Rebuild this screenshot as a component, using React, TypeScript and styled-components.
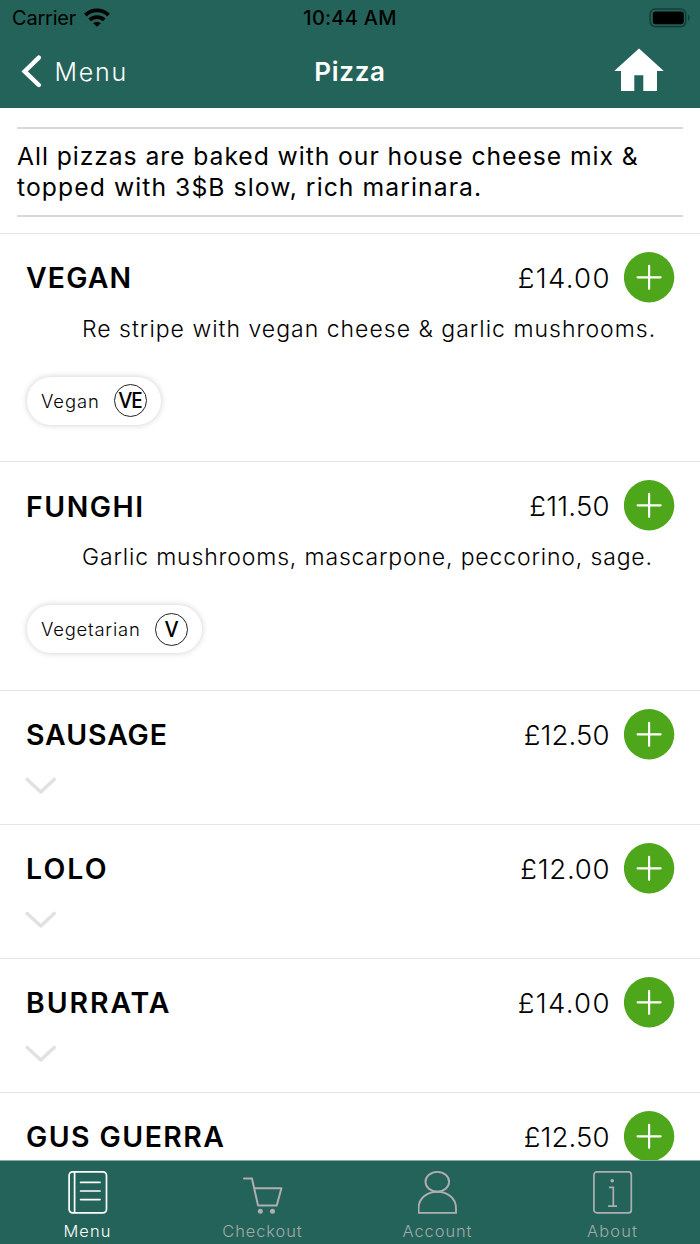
import React from "react";
import styled, { createGlobalStyle } from "styled-components";

const GREEN = "#24635a";

const GlobalStyle = createGlobalStyle`
  *, *::before, *::after { box-sizing: border-box; }
  body { margin: 0; background: #fff; }
  button { font: inherit; color: inherit; background: none; border: 0; padding: 0; margin: 0; }
  h1, h2, p { margin: 0; font-weight: inherit; }
  svg { display: block; flex: none; }
`;

const Screen = styled.div`
  display: flex;
  flex-direction: column;
  width: 700px;
  height: 1244px;
  overflow: hidden;
  background: #fff;
  color: #000;
  font-family: Inter, "Liberation Sans", sans-serif;
  white-space: nowrap;
`;

const Header = styled.header`
  flex: none;
  height: 108px;
  background: ${GREEN};
`;

const StatusBar = styled.div`
  display: grid;
  grid-template-columns: 1fr auto 1fr;
  align-items: center;
  height: 35px;
  padding: 0 12px;
  font-size: 20px;
`;

const Carrier = styled.div`
  display: flex;
  align-items: center;
  gap: 8px;
  letter-spacing: -0.2px;
`;

const Clock = styled.div`
  font-weight: 500;
  letter-spacing: 0.25px;
`;

const BatterySlot = styled.div`
  justify-self: end;
  margin-right: -2px;
`;

const NavBar = styled.nav`
  display: grid;
  grid-template-columns: 1fr auto 1fr;
  align-items: center;
  height: 73px;
  padding: 0 21px;
  color: #fff;
`;

const BackButton = styled.button`
  display: flex;
  align-items: center;
  gap: 12.5px;
  height: 60px;
  font-size: 25px;
  font-weight: 300;
  letter-spacing: 1.8px;
`;

const Title = styled.h1`
  font-size: 26px;
  font-weight: 600;
  letter-spacing: 0.7px;
`;

const HomeButton = styled.button`
  justify-self: end;
  margin: 0 15px 4px 0;
`;

const Content = styled.main`
  flex: 1;
  min-height: 0;
  overflow: hidden;
`;

const Intro = styled.p`
  margin: 19px 17px 15.6px;
  padding: 12px 0;
  border-top: 2px solid #d9d9d9;
  border-bottom: 2px solid #d9d9d9;
  font-size: 24.7px;
  line-height: 31px;
`;

const Line = styled.span<{ $tracking: number }>`
  display: block;
  letter-spacing: ${(p) => p.$tracking}px;
`;

const Item = styled.section<{ $open: boolean }>`
  height: ${(p) => (p.$open ? 228.7 : 134)}px;
  padding: 18px 25.5px 0 26px;
  border-top: 1px solid #e6e6e6;
`;

const ItemHead = styled.div`
  display: flex;
  align-items: center;
  height: 51px;
`;

const Name = styled.h2<{ $tracking: number }>`
  flex: 1;
  padding-top: 1px;
  font-size: 28.4px;
  font-weight: 600;
  letter-spacing: ${(p) => p.$tracking - 0.15}px;
`;

const Price = styled.span<{ $tracking: number }>`
  margin-right: ${(p) => 14 - p.$tracking}px;
  padding-top: 1px;
  font-size: 27.6px;
  font-weight: 300;
  letter-spacing: ${(p) => p.$tracking}px;
`;

const Description = styled.p<{ $tracking: number }>`
  margin: 11px 0 0 56px;
  font-size: 23px;
  font-weight: 300;
  line-height: 30px;
  letter-spacing: ${(p) => p.$tracking}px;
`;

const Chip = styled.div`
  display: inline-flex;
  align-items: center;
  gap: 14px;
  height: 48px;
  margin: 33px 0 0 1px;
  padding: 0 14px;
  border-radius: 24px;
  box-shadow: 0 0 6px rgba(0, 0, 0, 0.2);
  font-size: 18.4px;
  font-weight: 300;
`;

const ChipLabel = styled.span<{ $tracking: number }>`
  letter-spacing: ${(p) => p.$tracking}px;
`;

const DietMark = styled.span`
  display: flex;
  align-items: center;
  justify-content: center;
  width: 33px;
  height: 33px;
  padding: 0 0 2px;
  border: 1px solid #222;
  border-radius: 50%;
  font-family: "Noto Sans", "Open Sans", sans-serif;
  font-size: 21.5px;
  font-weight: 500;
  line-height: 29px;
  letter-spacing: -1.2px;
`;

const Expand = styled.button`
  display: block;
  margin: 17px 0 0 -1px;
`;

const TabBar = styled.footer`
  flex: none;
  display: grid;
  grid-template-columns: repeat(4, 1fr);
  height: 84px;
  border-top: 1px solid #8fa9a5;
  background: ${GREEN};
`;

const Tab = styled.button<{ $active: boolean }>`
  display: flex;
  flex-direction: column;
  align-items: center;
  padding-top: 9px;
  color: ${(p) => (p.$active ? "#fff" : "#b0aeb0")};
`;

const TabLabel = styled.span<{ $tracking: number; $active: boolean }>`
  margin-top: 5px;
  font-size: 16.4px;
  font-weight: 300;
  line-height: 24px;
  letter-spacing: ${(p) => p.$tracking}px;
  color: ${(p) => (p.$active ? "#fff" : "#a3aaa9")};
`;

const WifiIcon = () => (
  <svg width="26" height="20" viewBox="0 0 26 20">
    <g fill="none" stroke="#000" strokeWidth="3.8">
      <path d="M1.4 7.1C8 .9 18 .9 24.6 7.1" />
      <path d="M5.7 11.9C10 8.1 16 8.1 20.3 11.9" />
    </g>
    <path d="M9.2 15.3C11.4 13.4 14.6 13.4 16.8 15.3L13 18.8Z" />
  </svg>
);

const BatteryIcon = () => (
  <svg width="41" height="20" viewBox="0 0 41 20">
    <rect x="1.2" y="1" width="35.5" height="17.6" rx="5" fill="none" stroke="#133f38" strokeWidth="1.6" />
    <rect x="3.8" y="3.4" width="31" height="12.8" rx="2.6" />
    <path d="M39 6.8C41.2 7.6 41.2 12 39 12.8Z" fill="#133f38" />
  </svg>
);

const BackIcon = () => (
  <svg width="21" height="34" viewBox="0 0 21 34">
    <path d="M17.8 2.6L3.6 16.4L17.8 30" fill="none" stroke="#fff" strokeWidth="4.4" strokeLinecap="round" strokeLinejoin="miter" />
  </svg>
);

const HomeIcon = () => (
  <svg width="50" height="44" viewBox="0 0 50 44">
    <path d="M25 .5L49.8 23H43V43H29.3V27.3H20.3V43H7V23H.2Z" fill="#fff" />
  </svg>
);

const AddIcon = () => (
  <svg width="51" height="51" viewBox="0 0 51 51">
    <circle cx="25.1" cy="25.3" r="25.2" fill="#4ea61a" />
    <path d="M25.1 13.8V36.8M13.6 25.3H36.6" stroke="#fff" strokeWidth="2.2" strokeLinecap="round" />
  </svg>
);

const ChevronIcon = () => (
  <svg width="31" height="19" viewBox="0 0 31 19">
    <path d="M2.2 2.4L15.8 15L29.2 2.4" fill="none" stroke="#e1e1e3" strokeWidth="3.4" strokeLinecap="round" strokeLinejoin="round" />
  </svg>
);

const MenuIcon = () => (
  <svg width="40" height="44" viewBox="0 0 40 44" fill="none" stroke="currentColor" strokeWidth="1.7">
    <rect x="1.1" y="1.9" width="37.4" height="41" rx="3.6" />
    <path d="M6.6 2V43" />
    <path d="M12.6 12.4H32M12.6 21H32M12.6 29.6H32" strokeLinecap="round" />
  </svg>
);

const CartIcon = () => (
  <svg width="40" height="44" viewBox="0.3 0 40 44" fill="none" stroke="currentColor" strokeWidth="2" strokeLinecap="round" strokeLinejoin="round">
    <path d="M1.3 8.6H9.3L15.3 35.4H34L38.7 18.3H11.5" />
    <circle cx="17.6" cy="41.2" r="2.5" fill="currentColor" stroke="none" />
    <circle cx="29.8" cy="41.2" r="2.5" fill="currentColor" stroke="none" />
  </svg>
);

const AccountIcon = () => (
  <svg width="40" height="44" viewBox="0.7 0 40 44" fill="none" stroke="currentColor" strokeWidth="1.9">
    <ellipse cx="20" cy="11.8" rx="11.8" ry="9.9" />
    <path d="M1.3 42.9V38C1.3 28.2 9.6 21.7 20 21.7S38.7 28.2 38.7 38V42.9Z" />
  </svg>
);

const AboutIcon = () => (
  <svg width="40" height="44" viewBox="0.5 0 40 44" fill="none" stroke="currentColor" strokeWidth="1.7">
    <rect x="1.4" y="1.9" width="37.4" height="41" rx="3" />
    <path d="M16.5 17.4H20.8V36M15.6 36.2H24.5" />
    <circle cx="19.7" cy="10.8" r="1.8" fill="currentColor" stroke="none" />
  </svg>
);

interface Pizza {
  name: string;
  nameTracking: number;
  price: string;
  priceTracking: number;
  details?: {
    text: string;
    tracking: number;
    diet: string;
    dietTracking: number;
    mark: string;
  };
}

const pizzas: Pizza[] = [
  {
    name: "VEGAN", nameTracking: 1.3, price: "£14.00", priceTracking: 1.3,
    details: { text: "Re stripe with vegan cheese & garlic mushrooms.", tracking: 1.01, diet: "Vegan", dietTracking: 0.9, mark: "VE" },
  },
  {
    name: "FUNGHI", nameTracking: 1.7, price: "£11.50", priceTracking: 0.2,
    details: { text: "Garlic mushrooms, mascarpone, peccorino, sage.", tracking: 0.84, diet: "Vegetarian", dietTracking: 0.8, mark: "V" },
  },
  { name: "SAUSAGE", nameTracking: 1.1, price: "£12.50", priceTracking: 0.1 },
  { name: "LOLO", nameTracking: 2.3, price: "£12.00", priceTracking: 0.7 },
  { name: "BURRATA", nameTracking: 2.1, price: "£14.00", priceTracking: 1.3 },
  { name: "GUS GUERRA", nameTracking: 1.6, price: "£12.50", priceTracking: 0.1 },
];

const tabs = [
  { label: "Menu", tracking: 1.1, Icon: MenuIcon, active: true },
  { label: "Checkout", tracking: 0.95, Icon: CartIcon, active: false },
  { label: "Account", tracking: 0.95, Icon: AccountIcon, active: false },
  { label: "About", tracking: 1.2, Icon: AboutIcon, active: false },
];

const MenuItem = ({ pizza }: { pizza: Pizza }) => (
  <Item $open={!!pizza.details}>
    <ItemHead>
      <Name $tracking={pizza.nameTracking}>{pizza.name}</Name>
      <Price $tracking={pizza.priceTracking}>{pizza.price}</Price>
      <button aria-label="Add"><AddIcon /></button>
    </ItemHead>
    {pizza.details ? (
      <>
        <Description $tracking={pizza.details.tracking}>{pizza.details.text}</Description>
        <Chip>
          <ChipLabel $tracking={pizza.details.dietTracking}>{pizza.details.diet}</ChipLabel>
          <DietMark>{pizza.details.mark}</DietMark>
        </Chip>
      </>
    ) : (
      <Expand aria-label="Show details"><ChevronIcon /></Expand>
    )}
  </Item>
);

export default function App() {
  return (
    <>
      <GlobalStyle />
      <Screen>
        <Header>
          <StatusBar>
            <Carrier>Carrier <WifiIcon /></Carrier>
            <Clock>10:44 AM</Clock>
            <BatterySlot><BatteryIcon /></BatterySlot>
          </StatusBar>
          <NavBar>
            <BackButton><BackIcon />Menu</BackButton>
            <Title>Pizza</Title>
            <HomeButton aria-label="Home"><HomeIcon /></HomeButton>
          </NavBar>
        </Header>
        <Content>
          <Intro>
            <Line $tracking={0.94}>All pizzas are baked with our house cheese mix &amp;</Line>
            <Line $tracking={1.08}>topped with 3$B slow, rich marinara.</Line>
          </Intro>
          {pizzas.map((pizza) => <MenuItem key={pizza.name} pizza={pizza} />)}
        </Content>
        <TabBar>
          {tabs.map(({ label, tracking, Icon, active }) => (
            <Tab key={label} $active={active}>
              <Icon />
              <TabLabel $tracking={tracking} $active={active}>{label}</TabLabel>
            </Tab>
          ))}
        </TabBar>
      </Screen>
    </>
  );
}
